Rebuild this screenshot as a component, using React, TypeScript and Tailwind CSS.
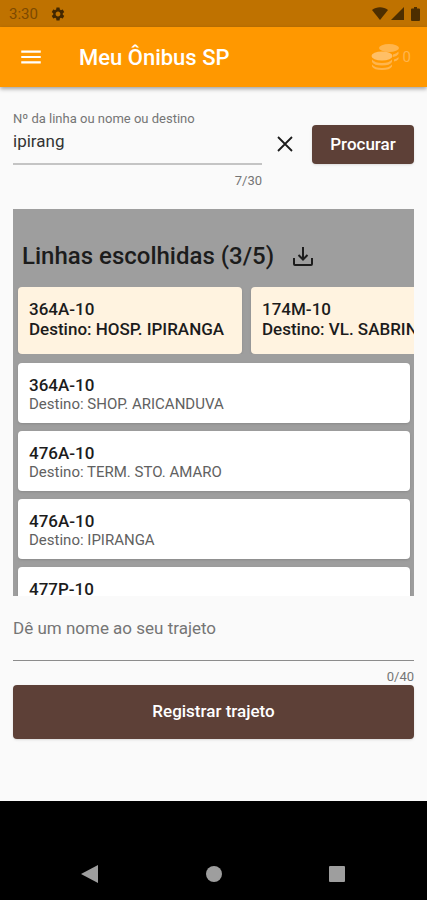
import { useState } from "react";
import { MdMenu, MdSettings } from "react-icons/md";

type Line = { id: number; code: string; destination: string };

const CHOSEN_LINES: Line[] = [
  { id: 1, code: "364A-10", destination: "HOSP. IPIRANGA" },
  { id: 2, code: "174M-10", destination: "VL. SABRINA" },
];

const FOUND_LINES: Line[] = [
  { id: 4, code: "364A-10", destination: "SHOP. ARICANDUVA" },
  { id: 5, code: "476A-10", destination: "TERM. STO. AMARO" },
  { id: 6, code: "476A-10", destination: "IPIRANGA" },
  { id: 7, code: "477P-10", destination: "RIO PEQUENO" },
];

function StatusBar() {
  return (
    <div className="flex h-[27px] shrink-0 items-center justify-between bg-[#bf7200] pr-[7px] pl-[9px]">
      <div className="flex items-center gap-3 text-[15px] leading-5 text-[#7d4a00]">
        <span>3:30</span>
        <MdSettings className="size-4 text-[#422700]" aria-hidden />
      </div>
      <div className="flex items-center gap-[3px] text-[#4d2e00]">
        <svg viewBox="0 0 16 13" className="h-[13px] w-4" fill="currentColor" aria-hidden>
          <path d="M8 13 0 3C4.500-.6 11.500-.6 16 3Z" />
        </svg>
        <svg viewBox="0 0 13 13" className="size-[13px]" fill="currentColor" aria-hidden>
          <path d="M13 0v13H0Z" />
        </svg>
        <svg viewBox="0 0 9 14" className="ml-1 h-[14px] w-[9px]" fill="currentColor" aria-hidden>
          <path d="M3 0h3v1.500h2q1 0 1 1V13q0 1-1 1H1q-1 0-1-1V2.500q0-1 1-1h2Z" />
        </svg>
      </div>
    </div>
  );
}

function CoinsIcon() {
  return (
    <svg viewBox="0 0 28 28" className="size-7" aria-hidden>
      <g fill="#ffb54d">
        <ellipse cx="18" cy="5" rx="10" ry="4" />
        <path d="M22 11.500q4-.8 5.500-3v2.500q-1.500 2.500-5.500 3ZM23 16.500q3-.8 4.500-2.500v2q-1.500 2-4.500 2.500Z" />
        <path d="M1 16.500q3 3.500 10 3.500t10-3.500v2.500q-2 3.500-10 3.500T1 19ZM1 21.500q3 3.500 10 3.500t10-3.500v2q-2 3.500-10 3.500T1 23.500Z" />
      </g>
      <ellipse cx="11" cy="13" rx="10.500" ry="4.500" fill="#ffbf66" />
    </svg>
  );
}

function AppBar() {
  return (
    <header className="z-10 flex h-[60px] shrink-0 items-center bg-[#ff9800] pr-4 pl-[18px] text-white shadow-[0_2px_4px_rgba(0,0,0,0.35)]">
      <button type="button" aria-label="Abrir menu">
        <MdMenu className="size-[26px]" aria-hidden />
      </button>
      <h1 className="ml-[35px] pt-0.5 text-[22px] leading-7 font-medium">Meu Ônibus SP</h1>
      <div className="ml-auto flex items-center gap-1 text-[15px] leading-5 text-[#ffb54d]">
        <CoinsIcon />
        <span>0</span>
      </div>
    </header>
  );
}

function CloseIcon() {
  return (
    <svg
      viewBox="0 0 24 24"
      className="size-6"
      fill="none"
      stroke="currentColor"
      strokeWidth="1.8"
      aria-hidden
    >
      <path d="m5 5 14 14M19 5 5 19" />
    </svg>
  );
}

function DownloadIcon() {
  return (
    <svg
      viewBox="0 0 22 21"
      className="h-[21px] w-[22px]"
      fill="none"
      stroke="currentColor"
      strokeWidth="2"
      aria-hidden
    >
      <path d="M11 1v12M6.500 9l4.500 4.500L15.500 9" />
      <path d="M2 12v6q0 1 1 1h16q1 0 1-1v-6" />
    </svg>
  );
}

function ChosenCard({ line }: { line: Line }) {
  return (
    <li className="h-[67px] min-w-56 shrink-0 rounded bg-[#fff3e0] px-[11px] pt-3 text-[17px] leading-5 font-medium whitespace-nowrap shadow-sm">
      <p>{line.code}</p>
      <p>Destino: {line.destination}</p>
    </li>
  );
}

function LineCard({ line }: { line: Line }) {
  return (
    <li className="h-[60px] shrink-0 rounded bg-white px-[11px] pt-3 shadow-sm">
      <p className="text-[17px] leading-5 font-medium">{line.code}</p>
      <p className="text-[15px] leading-[18px] text-[#616161]">Destino: {line.destination}</p>
    </li>
  );
}

export default function App() {
  const [query, setQuery] = useState("ipirang");
  const [routeName, setRouteName] = useState("");

  return (
    <div className="flex min-h-screen flex-col bg-[#fafafa] font-[Roboto,sans-serif] text-[#1c1c1c]">
      <StatusBar />
      <AppBar />

      <main className="flex flex-1 flex-col px-[13px]">
        <form className="flex items-start pt-6" onSubmit={(e) => e.preventDefault()}>
          <div className="min-w-0 flex-1">
            <label htmlFor="query" className="block text-[13px] leading-4 text-[#757575]">
              Nº da linha ou nome ou destino
            </label>
            <input
              id="query"
              value={query}
              maxLength={30}
              onChange={(e) => setQuery(e.target.value)}
              className="block h-[38px] w-full border-b-2 border-[#c4c4c4] pb-[9px] text-[17px] text-[#333] outline-none"
            />
            <p className="mt-2 text-right text-[13px] leading-4 text-[#757575]">{query.length}/30</p>
          </div>
          <button
            type="button"
            aria-label="Limpar"
            className="mt-[21px] mr-[15px] ml-[11px]"
            onClick={() => setQuery("")}
          >
            <CloseIcon />
          </button>
          <button
            type="submit"
            className="mt-[14px] h-[39px] w-[102px] rounded bg-[#5d4037] text-[17px] font-medium text-white shadow"
          >
            Procurar
          </button>
        </form>

        <section className="mt-5 flex h-[387px] flex-col overflow-hidden bg-[#9e9e9e]">
          <div className="flex h-[78px] shrink-0 items-center gap-[18px] pt-4 pl-[9px]">
            <h2 className="text-2xl leading-7 font-medium">Linhas escolhidas (3/5)</h2>
            <button type="button" aria-label="Salvar linhas">
              <DownloadIcon />
            </button>
          </div>
          <ul className="flex shrink-0 gap-[9px] overflow-hidden pl-[5px]">
            {CHOSEN_LINES.map((line) => (
              <ChosenCard key={line.id} line={line} />
            ))}
          </ul>
          <ul className="mt-[9px] flex flex-col gap-2 pr-1 pl-[5px]">
            {FOUND_LINES.map((line) => (
              <LineCard key={line.id} line={line} />
            ))}
          </ul>
        </section>

        <div className="flex flex-col">
          <input
            aria-label="Dê um nome ao seu trajeto"
            placeholder="Dê um nome ao seu trajeto"
            value={routeName}
            maxLength={40}
            onChange={(e) => setRouteName(e.target.value)}
            className="h-[65px] w-full border-b border-[#8c8c8c] text-[17px] outline-none placeholder:text-[#757575]"
          />
          <p className="mt-2 text-right text-[13px] leading-4 text-[#757575]">{routeName.length}/40</p>
          <button
            type="button"
            className="h-[54px] w-full rounded bg-[#5d4037] text-[17px] font-medium text-white shadow"
          >
            Registrar trajeto
          </button>
        </div>
      </main>

      <nav className="flex h-[99px] shrink-0 items-end justify-between bg-black px-[81px] pb-[17px] text-[#9e9e9e]">
        <button type="button" aria-label="Voltar">
          <svg viewBox="0 0 18 18" className="size-[18px]" fill="currentColor" aria-hidden>
            <path d="M17 0v18L0 9Z" />
          </svg>
        </button>
        <button type="button" aria-label="Início">
          <svg viewBox="0 0 18 18" className="size-[18px]" fill="currentColor" aria-hidden>
            <circle cx="9" cy="9" r="8" />
          </svg>
        </button>
        <button type="button" aria-label="Recentes">
          <svg viewBox="0 0 18 18" className="size-[18px]" fill="currentColor" aria-hidden>
            <rect x="1" y="1" width="16" height="16" rx="1" />
          </svg>
        </button>
      </nav>
    </div>
  );
}
